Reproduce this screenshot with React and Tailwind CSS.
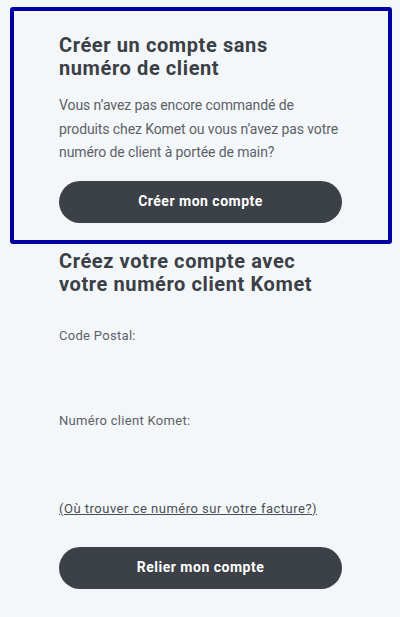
export default function App() {
  return (
    <div
      className="min-h-[617px] bg-[#f4f7fa] pt-[7px] pb-8 text-[#3b4046]"
      style={{ fontFamily: "Roboto, 'Liberation Sans', sans-serif" }}
    >
      {/* Account without client number */}
      <div className="ml-[10px] w-[382px] rounded-[3px] border-4 border-[#0000a0] pl-[45px] pr-[45px] pt-[23px] pb-[17px]">
        <h2 className="w-[260px] text-[20px] font-bold leading-[23px] tracking-[0.6px] text-[#3b4046]">
          Créer un compte sans numéro de client
        </h2>
        <p className="mt-[14px] text-[14px] leading-[23.5px] tracking-[-0.1px] text-[#5c6168]">
          Vous n’avez pas encore commandé de produits chez Komet ou vous n’avez pas votre numéro de client à portée de main?
        </p>
        <button className="mt-[16px] h-[42px] w-[283px] rounded-full bg-[#3c4147] text-[14px] font-bold tracking-[0.5px] text-white">
          Créer mon compte
        </button>
      </div>

      {/* Account with client number */}
      <div className="pl-[59px] pr-[45px] pt-[6px]">
        <h2 className="w-[260px] text-[20px] font-bold leading-[23px] tracking-[0.6px] text-[#3b4046]">
          Créez votre compte avec votre numéro client Komet
        </h2>
        <div className="mt-[31px] text-[13px] leading-[18px] tracking-[0.3px] text-[#5c6168]">
          Code Postal:
        </div>
        <div className="mt-[67px] text-[13px] leading-[18px] tracking-[0.3px] text-[#5c6168]">
          Numéro client Komet:
        </div>
        <a
          href="#"
          className="mt-[70px] block text-[13px] leading-[18px] tracking-[0.5px] text-[#4a4f56] underline"
        >
          (Où trouver ce numéro sur votre facture?)
        </a>
        <button className="mt-[29px] h-[42px] w-[283px] rounded-full bg-[#3c4147] text-[14px] font-bold tracking-[0.5px] text-white">
          Relier mon compte
        </button>
      </div>
    </div>
  );
}
